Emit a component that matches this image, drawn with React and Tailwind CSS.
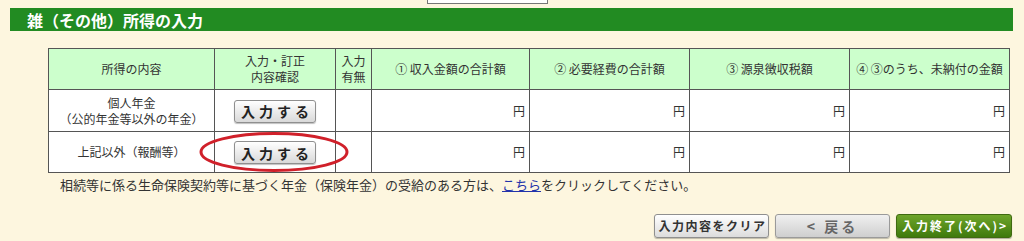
import React from "react";

const font = "font-['Noto_Sans_CJK_JP','Noto_Sans',sans-serif]";

const cols = [166, 121, 36, 158, 160, 160, 160];

const headers = [
  ["所得の内容"],
  ["入力・訂正", "内容確認"],
  ["入力", "有無"],
  ["①\u00a0収入金額の合計額"],
  ["②\u00a0必要経費の合計額"],
  ["③\u00a0源泉徴収税額"],
  ["④\u00a0③のうち、未納付の金額"],
];

const rows = [
  { label: ["個人年金", "（公的年金等以外の年金）"], marked: false },
  { label: ["上記以外（報酬等）"], marked: true },
];

const InputButton = () => (
  <button className="h-[23px] w-[82px] rounded-[3px] border border-[#8f8f8f] bg-gradient-to-b from-[#ffffff] to-[#d9d9d9] pl-[4px] text-[14px] leading-none font-bold tracking-[4px] text-[#222] shadow-[0_1px_1px_rgba(0,0,0,0.25)]">
    入力する
  </button>
);

const Yen = () => (
  <td className="border border-[#555] bg-white pr-[4px] text-right align-middle text-[12px] text-[#333]">
    円
  </td>
);

export default function App() {
  return (
    <div className={`h-[241px] w-[1024px] overflow-hidden bg-[#fdf6df] ${font}`}>
      <div className="ml-[427px] h-[4px] w-[121px] border-x border-b border-[#777] bg-white" />
      <div className="mt-[4px] ml-[10px] flex h-[23px] w-[1003px] items-center bg-[#228b22] pl-[17px] text-[16px] font-bold text-white">
        雑（その他）所得の入力
      </div>

      <table className="mt-[17px] ml-[48px] table-fixed border-collapse border border-[#555]">
        <colgroup>
          {cols.map((w, i) => (
            <col key={i} style={{ width: w }} />
          ))}
        </colgroup>
        <thead>
          <tr className="h-[41px]">
            {headers.map((lines, i) => (
              <th
                key={i}
                className="border border-[#555] bg-[#ccffcc] p-0 text-center align-middle text-[12px] leading-[16px] font-normal text-[#333]"
              >
                {lines.map((l, j) => (
                  <React.Fragment key={j}>
                    {j > 0 && <br />}
                    {l}
                  </React.Fragment>
                ))}
              </th>
            ))}
          </tr>
        </thead>
        <tbody>
          {rows.map((row, i) => (
            <tr key={i} className={i === 0 ? "h-[42px]" : "h-[41px]"}>
              <td className="border border-[#555] bg-white text-center align-middle text-[12px] leading-[16px] text-[#333]">
                {row.label.map((l, j) => (
                  <React.Fragment key={j}>
                    {j > 0 && <br />}
                    {l}
                  </React.Fragment>
                ))}
              </td>
              <td className="relative border border-[#555] bg-white text-center align-middle">
                <InputButton />
                {row.marked && (
                  <svg
                    className="pointer-events-none absolute top-[-1px] left-[-18px]"
                    width="154"
                    height="44"
                    viewBox="0 0 154 44"
                  >
                    <ellipse
                      cx="77"
                      cy="21"
                      rx="73"
                      ry="18.5"
                      fill="none"
                      stroke="#d0202a"
                      strokeWidth="3"
                    />
                  </svg>
                )}
              </td>
              <td className="border border-[#555] bg-white" />
              <Yen />
              <Yen />
              <Yen />
              <Yen />
            </tr>
          ))}
        </tbody>
      </table>

      <p className="mt-[4px] ml-[60px] text-[13px] leading-[16px] text-[#333]">
        相続等に係る生命保険契約等に基づく年金（保険年金）の受給のある方は、
        <a className="text-[#2233aa] underline">こちら</a>
        をクリックしてください。
      </p>

      <div className="mt-[21px] flex justify-end gap-[6px] pr-[12px]">
        <button className="h-[24px] w-[115px] rounded-[3px] border border-[#8f8f8f] bg-gradient-to-b from-[#ffffff] to-[#dcdcdc] pl-[2px] text-[12px] leading-none font-bold tracking-[1.5px] text-[#333] shadow-[0_1px_1px_rgba(0,0,0,0.25)]">
          入力内容をクリア
        </button>
        <button className="h-[24px] w-[115px] rounded-[3px] border border-[#9a9a9a] bg-gradient-to-b from-[#f0f0f0] to-[#cfcfcf] text-[14px] leading-none font-bold tracking-[3px] text-[#666] shadow-[0_1px_1px_rgba(0,0,0,0.25)]">
          &lt;&nbsp;戻る
        </button>
        <button className="h-[24px] w-[116px] rounded-[3px] border border-[#3f6a10] bg-gradient-to-b from-[#6ea52a] to-[#3f7a0c] pl-[2px] text-[12px] leading-none font-bold tracking-[2px] text-white shadow-[0_1px_1px_rgba(0,0,0,0.3)]">
          入力終了(次へ)&gt;
        </button>
      </div>
    </div>
  );
}
